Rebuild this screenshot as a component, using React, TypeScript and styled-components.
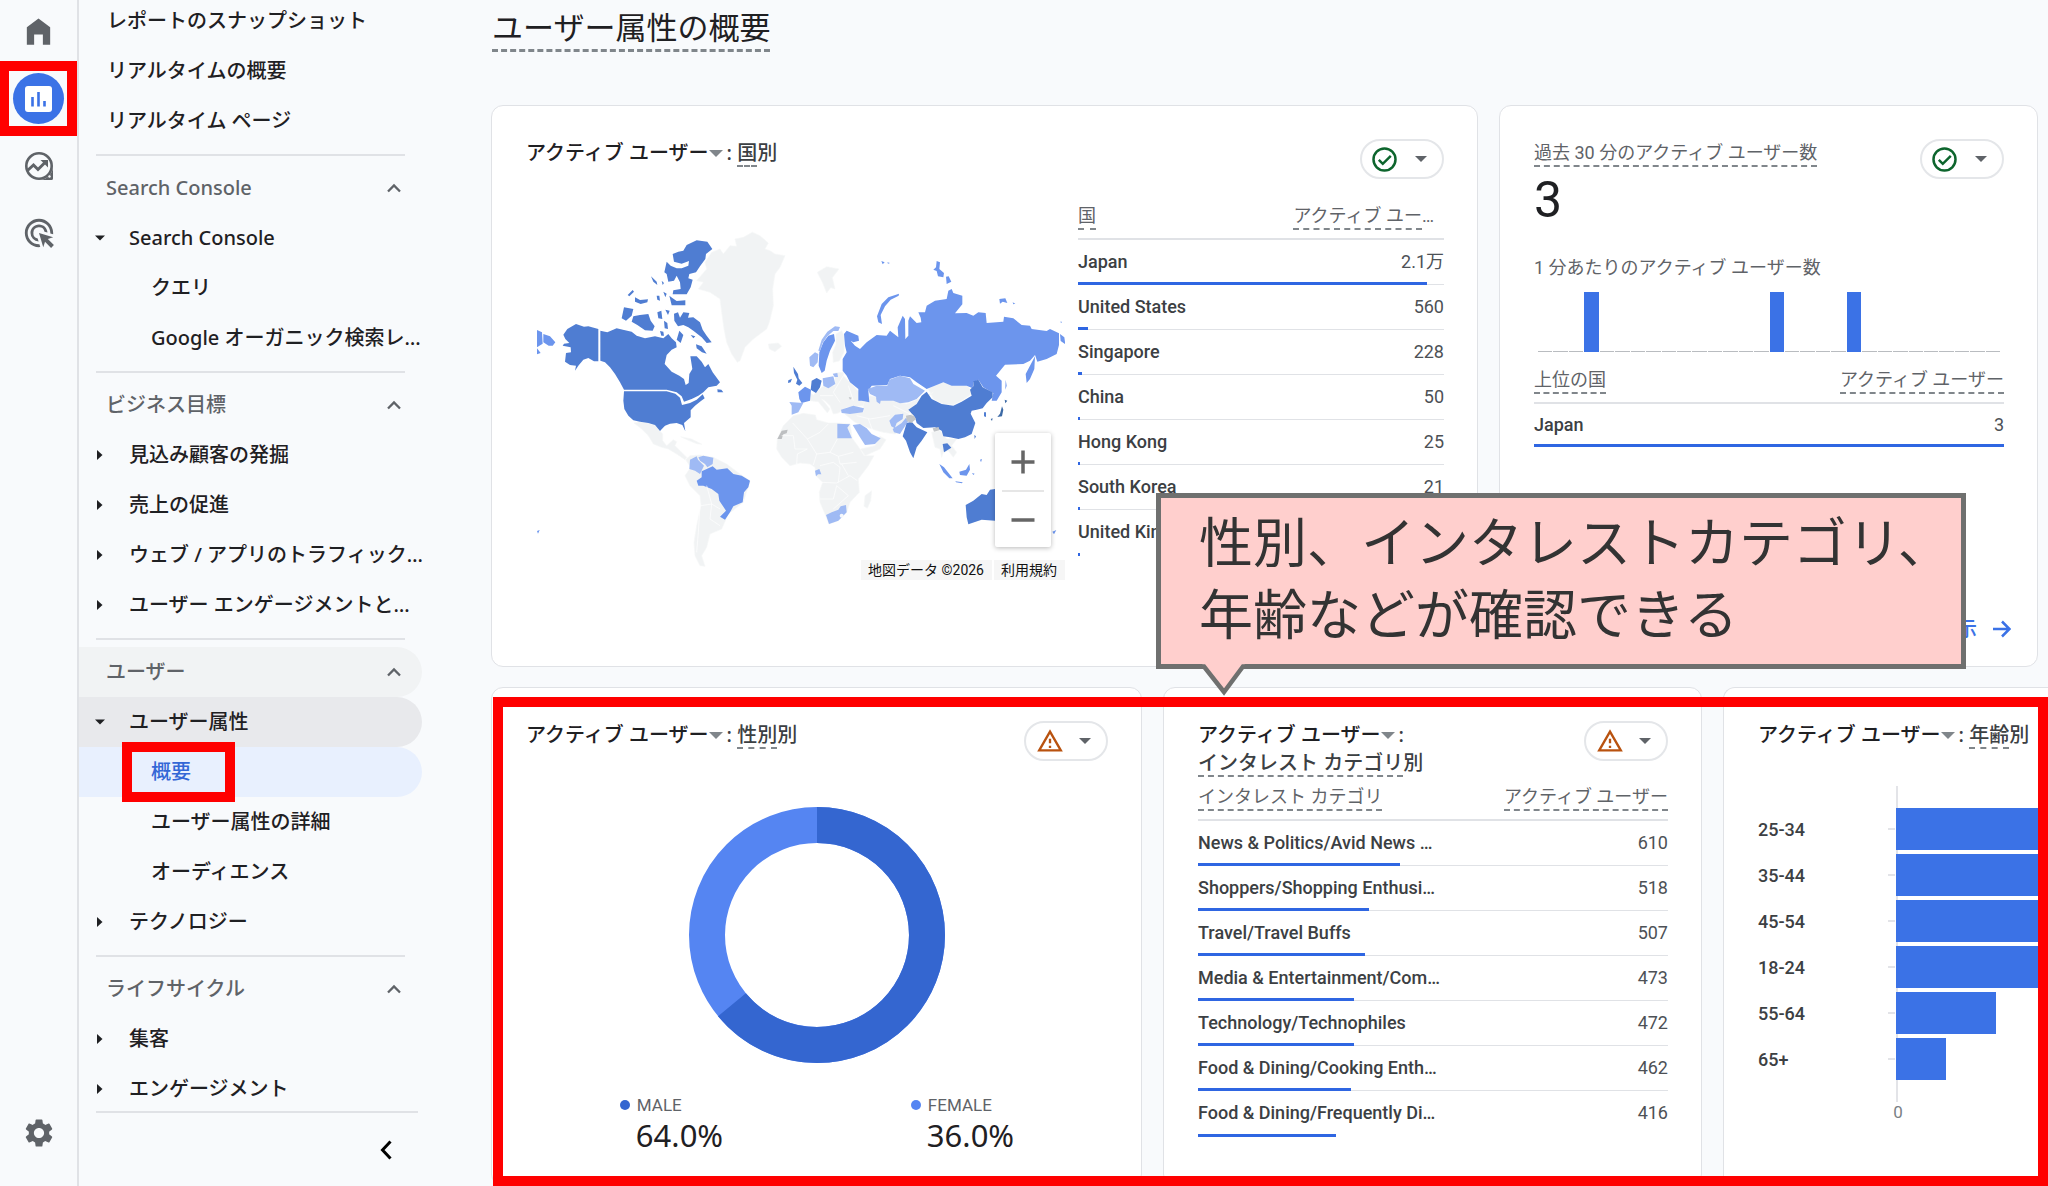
import React from "react";
import styled, { createGlobalStyle } from "styled-components";
import { MdAdsClick, MdSettings } from "react-icons/md";

const ui = `Roboto, "Noto Sans CJK JP", sans-serif`;
const brand = `"Noto Sans", "Noto Sans CJK JP", sans-serif`;

const color = {
  page: "#f8fafc",
  line: "#e0e2e6",
  ink: "#1f2023",
  text: "#3c4043",
  muted: "#5f6368",
  dash: "#80868b",
  blue: "#3b72e6",
  bar: "#2f66e2",
  red: "#ff0000",
};

const Global = createGlobalStyle`
  *, *::before, *::after { box-sizing: border-box; }
  html, body { margin: 0; height: 100%; }
  body { background: ${color.page}; font-family: ${ui}; color: ${color.text}; overflow: hidden; }
  button { font: inherit; color: inherit; background: none; border: 0; padding: 0; margin: 0; cursor: pointer; }
  a { color: inherit; text-decoration: none; }
  svg { display: block; flex: none; }
`;

const Shell = styled.div`
  display: flex;
  height: 100vh;
  overflow: hidden;
`;

/* ---------- red annotation frame ---------- */

const Frame = styled.span<{ $inset: string }>`
  position: absolute;
  inset: ${(p) => p.$inset};
  border: 10px solid ${color.red};
  pointer-events: none;
`;

/* ---------- icon rail ---------- */

const Rail = styled.nav`
  flex: none;
  width: 79px;
  border-right: 2px solid ${color.line};
  display: flex;
  flex-direction: column;
  align-items: center;
  padding: 6px 0 28px;
  gap: 16px;
`;

const RailButton = styled.button<{ $active?: boolean; $last?: boolean }>`
  position: relative;
  width: 51px;
  height: 51px;
  border-radius: 50%;
  display: grid;
  place-items: center;
  color: ${(p) => (p.$active ? "#fff" : color.muted)};
  background: ${(p) => (p.$active ? color.blue : "none")};
  margin-top: ${(p) => (p.$last ? "auto" : "0")};
`;

/* ---------- navigation ---------- */

const Side = styled.nav`
  flex: none;
  width: 343px;
  display: flex;
  flex-direction: column;
  font-family: ${brand};
  font-size: 20px;
  font-weight: 500;
  line-height: 30px;
  color: ${color.ink};
`;

const Scroller = styled.div`
  flex: 1;
  margin-top: -4px;
  min-height: 0;
`;

const rowTone = {
  none: "transparent",
  section: "#f1f3f4",
  parent: "#e8e9ec",
  current: "#e8f0fe",
};

const NavRow = styled.a<{ $indent: number; $tone: keyof typeof rowTone }>`
  position: relative;
  display: flex;
  align-items: center;
  width: 100%;
  height: 50px;
  padding-left: ${(p) => p.$indent}px;
  border-radius: 0 25px 25px 0;
  background: ${(p) => rowTone[p.$tone]};
  color: ${(p) => (p.$tone === "current" ? "#3367d6" : "inherit")};
  white-space: nowrap;
`;

const SectionRow = styled(NavRow)`
  justify-content: space-between;
  padding-right: 20px;
  color: ${color.muted};
`;

const Twist = styled.span`
  width: 34px;
  padding-left: 16px;
  box-sizing: content-box;
  flex: none;
`;

const Rule = styled.hr`
  margin: 8px 17px 7px;
  border: 0;
  height: 2px;
  background: ${color.line};
`;

const SideFoot = styled.div`
  margin: 0 4px 0 17px;
  border-top: 2px solid ${color.line};
  height: 75px;
  display: flex;
  justify-content: flex-end;
  align-items: center;
  padding-right: 26px;
`;

/* ---------- report area ---------- */

const Main = styled.main`
  flex: 1;
  min-width: 0;
  padding-left: 69px;
  display: flex;
  flex-direction: column;
`;

const PageTitle = styled.h1`
  align-self: flex-start;
  margin: 5px 0 53px 1px;
  font-family: ${brand};
  font-size: 31px;
  font-weight: 400;
  line-height: 44px;
  color: ${color.ink};
  border-bottom: 3px dashed ${color.dash};
`;

const TopRow = styled.div`
  display: grid;
  grid-template-columns: 987fr 539fr;
  gap: 21px;
  margin-right: 10px;
  min-height: 562px;
`;

const BottomRow = styled.div`
  position: relative;
  flex: 1;
  margin-top: 20px;
  display: grid;
  grid-template-columns: 651fr 539fr 325fr;
  gap: 21px;
`;

const Card = styled.section<{ $bleed?: boolean }>`
  display: flex;
  flex-direction: column;
  min-width: 0;
  padding: 33px ${(p) => (p.$bleed ? 0 : 33)}px 0 34px;
  background: #fff;
  border: 1px solid ${color.line};
  border-width: ${(p) => (p.$bleed ? "1px 0 0 1px" : "1px")};
  border-radius: ${(p) => (p.$bleed ? "12px 0 0 0" : "12px")};
`;

const CardHead = styled.header`
  display: flex;
  justify-content: space-between;
  align-items: flex-start;
`;

const CardTitle = styled.h2`
  margin: 0;
  font-family: ${brand};
  font-size: 20px;
  font-weight: 500;
  line-height: 28px;
  color: ${color.text};
`;

const MetricButton = styled.button`
  display: inline-flex;
  align-items: center;
  margin-right: 4px;
  color: ${color.ink};
`;

const Dashed = styled.span`
  display: inline-block;
  line-height: 24px;
  border-bottom: 2px dashed ${color.dash};
`;

const Status = styled.button`
  flex: none;
  width: 84px;
  height: 40px;
  padding: 0 15px 0 10px;
  border: 2px solid #e4e6e9;
  border-radius: 20px;
  display: flex;
  align-items: center;
  justify-content: space-between;
`;

/* ---------- data table ---------- */

const Table = styled.table`
  width: 100%;
  border-collapse: collapse;
  font-size: 18px;
  line-height: 24px;
`;

const HeadCell = styled.th<{ $end?: boolean }>`
  height: 43px;
  padding: 0;
  font-weight: 400;
  white-space: nowrap;
  color: ${color.muted};
  text-align: ${(p) => (p.$end ? "right" : "left")};
  vertical-align: middle;
  border-bottom: 2px solid ${color.line};
`;

const Row = styled.tr<{ $height: number }>`
  position: relative;
  height: ${(p) => p.$height}px;
  border-bottom: 1px solid ${color.line};
  &:last-child { border-bottom: 0; }
`;

const NameCell = styled.th`
  padding: 0;
  font-weight: 500;
  text-align: left;
  white-space: nowrap;
`;

const ValueCell = styled.td`
  padding: 0;
  text-align: right;
  color: #4d5156;
`;

const Meter = styled.span`
  position: absolute;
  left: 0;
  bottom: -2px;
  height: 3px;
  background: ${color.bar};
`;

const ShortHead = styled.span`
  padding-right: 10px;
`;

/* ---------- map ---------- */

const MapBody = styled.div`
  display: grid;
  grid-template-columns: 528fr 366fr;
  gap: 13px;
  align-items: start;
  padding: 17px 0 0 11px;
`;

const MapBox = styled.div`
  position: relative;
  margin-top: 28px;
  height: 357px;
`;

const ZoomPanel = styled.div`
  position: absolute;
  right: 14px;
  bottom: 34px;
  width: 56px;
  display: flex;
  flex-direction: column;
  align-items: center;
  background: #fff;
  border-radius: 2px;
  box-shadow: 0 1px 5px rgba(0, 0, 0, 0.28);
`;

const ZoomButton = styled.button`
  width: 42px;
  height: 57px;
  display: grid;
  place-items: center;
  & + & { border-top: 2px solid #e6e6e6; }
`;

const Credits = styled.div`
  position: absolute;
  right: 0;
  bottom: 1px;
  display: flex;
  gap: 2px;
  font-size: 14px;
  line-height: 20px;
  color: #111;
  span, a { background: #f6f6f6; padding: 0 8px 0 7px; }
`;

/* ---------- realtime card ---------- */

const Caption = styled.div`
  font-size: 18px;
  line-height: 28px;
  color: ${color.muted};
`;

const Big = styled.div`
  font-size: 50px;
  line-height: 42px;
  margin-bottom: 33px;
  color: ${color.ink};
`;

const Spark = styled.div`
  display: flex;
  align-items: flex-end;
  gap: 1px;
  height: 60px;
  margin: 10px 4px 8px;
`;

const Tick = styled.i<{ $on: boolean }>`
  flex: 1;
  height: ${(p) => (p.$on ? 60 : 1)}px;
  background: ${(p) => (p.$on ? color.blue : "#b9bcc0")};
`;

const MoreLink = styled.a`
  margin: auto -7px 23px auto;
  display: flex;
  align-items: center;
  gap: 16px;
  font-size: 20px;
  line-height: 28px;
  font-weight: 500;
  color: ${color.blue};
`;

/* ---------- donut ---------- */

const DonutBox = styled.div`
  display: flex;
  justify-content: center;
  margin: 46px 0 30px;
`;

const Legend = styled.dl`
  margin: 0;
  display: grid;
  grid-template-columns: 1fr 1fr;
  justify-items: center;
`;

const LegendName = styled.dt<{ $dot: string }>`
  display: flex;
  align-items: center;
  gap: 7px;
  font-size: 17px;
  line-height: 24px;
  color: ${color.muted};
  &::before {
    content: "";
    width: 10px;
    height: 10px;
    border-radius: 50%;
    background: ${(p) => p.$dot};
  }
`;

const LegendValue = styled.dd`
  margin: 0 0 0 16px;
  font-family: ${brand};
  font-size: 31px;
  line-height: 36px;
  color: ${color.ink};
`;

/* ---------- age chart ---------- */

const Bars = styled.div`
  position: relative;
  margin-top: 37px;
  padding: 20px 0;
  font-size: 18px;
  font-weight: 500;
  &::before {
    content: "";
    position: absolute;
    left: 138px;
    top: 0;
    bottom: 0;
    width: 2px;
    background: #e3e4e8;
  }
`;

const BarRow = styled.div`
  position: relative;
  display: grid;
  grid-template-columns: 130px 8px 1fr;
  align-items: center;
  height: 46px;
`;

const TickMark = styled.i`
  width: 7px;
  height: 2px;
  background: #e3e4e8;
`;

const BarFill = styled.span`
  height: 42px;
  background: ${color.blue};
`;

const Zero = styled.div`
  width: 280px;
  text-align: center;
  font-size: 17px;
  line-height: 20px;
  color: #7a7f85;
`;

/* ---------- callout ---------- */

const Callout = styled.aside`
  position: absolute;
  left: 665px;
  top: -194px;
  width: 810px;
  height: 176px;
  padding: 6px 0 0 38px;
  background: #ffcfcd;
  border: 5px solid #6f706f;
  font-family: "Noto Sans CJK JP", sans-serif;
  font-size: 54px;
  line-height: 72px;
  white-space: nowrap;
  color: #333;
`;

const Tail = styled.svg`
  position: absolute;
  left: 40px;
  top: 166px;
`;

/* ---------- small glyphs ---------- */

const Caret = ({ fill = "#5f6368", w = 12 }: { fill?: string; w?: number }) => (
  <svg width={w} height={w / 2} viewBox="0 0 12 6"><path d="M0 0h12L6 6z" fill={fill} /></svg>
);
const CaretRight = () => (
  <svg width="10" height="10" viewBox="0 0 10 10"><path d="M2 0l5.500 5-5.500 5z" fill="#1f2023" /></svg>
);
const CaretDown = () => (
  <svg width="10" height="10" viewBox="0 0 10 10"><path d="M0 2.500h10l-5 5z" fill="#1f2023" /></svg>
);
const ChevronUp = () => (
  <svg width="16" height="16" viewBox="0 0 16 16" fill="none" stroke="#5f6368" strokeWidth="2.300"><path d="M2 11.500l6-6 6 6" /></svg>
);
const HomeIcon = () => (
  <svg width="35" height="35" viewBox="0 0 24 24" fill="currentColor"><path d="M4 21V9l8-6 8 6v12h-5v-7H9v7z" /></svg>
);
const ChartIcon = () => (
  <svg width="27" height="26" viewBox="0 0 27 26">
    <rect width="27" height="26" rx="3" fill="#fff" />
    <path d="M7.500 11v9.500M13.500 6v14.500M19.500 15v5.500" stroke={color.blue} strokeWidth="2.600" />
  </svg>
);
const ExploreIcon = () => (
  <svg width="30" height="30" viewBox="0 0 30 30" fill="none">
    <circle cx="15" cy="15" r="12.700" stroke="currentColor" strokeWidth="2.600" />
    <path d="M29 15v12.500a1.500 1.500 0 0 1-1.500 1.500H15a14 14 0 0 0 14-14z" fill="currentColor" />
    <circle cx="25.500" cy="25.500" r="1.200" fill={color.page} />
    <path d="M3.500 19.500l6-5.500 4.500 4.500 7.500-7.500" stroke="currentColor" strokeWidth="3" />
    <path d="M16.500 9H24v7.500z" fill="currentColor" />
  </svg>
);
const CheckIcon = () => (
  <svg width="25" height="25" viewBox="0 0 25 25" fill="none" stroke="#0d652d" strokeWidth="2.500">
    <circle cx="12.500" cy="12.500" r="11" /><path d="M6.800 12.800l4 4 8-8" />
  </svg>
);
const WarnIcon = () => (
  <svg width="28" height="28" viewBox="0 0 24 24" fill="#b9520f">
    <path d="M12 5.990L19.530 19H4.470L12 5.990M12 2L1 21h22L12 2zm1 14h-2v2h2v-2zm0-6h-2v4h2v-4z" />
  </svg>
);

/* ---------- world map drawing ---------- */

const dark = "#4f7dd2";
const mid = "#6c95ed";
const pale = "#9fbaf4";
const land = "#f1f3f4";

const west: [string, string[]][] = [
  [land, [
    "M697 40L720 50 745 72 735 90 750 95 765 105 795 110 780 145 765 165 758 210 760 260 748 310 740 330 700 360 675 385 660 425 652 430 635 405 620 370 612 330 605 280 600 240 570 220 535 210 550 190 530 185 560 150 555 130 575 100 600 90 610 105 630 80 650 82 645 60 670 55Z",
    "M745 375L775 372 785 382 765 398 748 390Z",
    "M892 160L920 143 957 150 937 176 945 210 932 206 920 222 908 192Z",
    "M342 612L360 608 385 612 405 618 420 636 428 645 428 665 440 680 460 662 470 668 465 680 485 700 500 715 495 722 470 705 445 690 425 685 400 675 385 650 365 630Z",
    "M482 653L515 660 546 676 530 674 505 664Z",
    "M497 722L510 710 540 708 580 715 620 735 660 765 690 785 670 850 625 885 605 930 570 945 560 985 545 1010 555 1042 540 1040 525 1010 522 970 530 920 543 860 540 830 510 800 495 770 512 745Z",
    "M820 590L850 583 886 588 890 602 925 612 952 612 990 614 997 658 1020 690 1032 710 1062 710 1045 740 1015 780 1018 820 990 850 980 880 955 905 927 915 915 885 900 850 898 820 908 790 888 770 885 745 870 735 840 732 810 740 785 715 770 690 772 660 790 620Z",
    "M1035 830L1055 815 1052 845 1042 868 1032 862Z",
    "M868 520L880 528 905 505 912 500 945 500 945 462 968 460 975 430 970 470 1000 500 1035 540 1030 560 980 565 955 582 940 585 930 560 915 545 905 540 930 570 922 582 895 548 870 545Z",
    "M948 345L965 335 972 350 972 400 958 426 940 430 938 400 948 375Z",
  ]],
  [dark, [
    "M130 347L142 330 168 315 192 323 205 322 235 330 235 427 222 427 205 417 190 422 175 440 165 455 168 440 150 438 135 428 138 402 153 400 152 385 128 380 132 374 148 372 136 360Z",
    "M241 335L262 340 290 328 312 333 335 338 350 350 375 358 405 352 430 358 445 345 455 358 468 370 470 385 455 392 440 408 434 435 455 458 478 470 492 480 497 498 506 492 508 465 517 450 511 412 530 412 545 428 555 445 565 435 578 460 600 490 590 500 565 505 550 520 535 530 515 540 492 548 485 532 470 520 440 512 312 512 300 490 285 465 270 445 255 430 241 425Z",
    "M312 517L440 517 466 524 480 536 486 558 510 552 530 542 548 526 554 538 540 548 525 560 512 574 512 595 492 612 496 637 487 618 470 612 450 614 435 620 420 636 405 618 385 612 360 608 340 604 325 590 313 570 310 545Z",
    "M458 105L475 98 490 95 500 78 530 64 562 68 577 90 558 105 556 120 540 142 528 160 508 165 505 178 518 182 512 205 500 226 458 226 460 214 482 210 480 190 470 170 462 185 445 188 440 165 433 160 440 128 452 140 470 148 485 148 505 140 507 126 485 134 462 128Z",
    "M448 230L458 238 470 246 496 244 496 259 455 259Z",
    "M312 265L340 270 335 290 318 305 305 298Z",
    "M340 292L360 288 385 285 392 305 404 322 398 335 375 334 352 318 335 308Z",
    "M462 284L474 280 480 296 490 280 508 282 504 296 520 295 540 310 548 332 560 350 575 370 560 372 545 355 520 335 505 325 490 318 474 322 463 305Z",
    "M345 235L360 243 384 241 382 250 362 255 345 248Z", "M323 228L338 213 342 218 328 232Z",
    "M393 172L410 188 412 198 400 188Z", "M410 230L418 230 420 245 412 242Z", "M430 218L440 224 436 235Z",
    "M412 280L424 275 427 300 415 298Z", "M432 305L442 312 444 330 434 328Z", "M436 272L449 275 444 288Z",
    "M425 185L432 192 428 198Z", "M478 335L490 348 482 372 470 362Z", "M528 376L545 382 560 404 546 400 530 388Z",
    "M512 348L526 352 520 358Z", "M592 511L604 512 610 520 593 520Z", "M420 336L430 338 432 350 424 350Z",
    "M820 443L834 465 836 478 847 492 838 500 828 494 832 482 822 462Z", "M805 484L816 479 812 490 804 492Z",
    "M875 485L890 477 905 485 900 505 888 522 872 512Z",
  ]],
  [mid, [
    "M545 757L560 750 578 742 590 752 622 748 640 765 665 770 690 785 685 805 672 820 668 850 640 862 630 880 615 902 600 893 618 875 598 845 595 825 575 810 550 800 535 800 530 785 545 775Z",
    "M51 333L66 340 68 374 51 385Z", "M70 345L90 352 106 370 98 380 86 380 70 370Z", "M51 388L62 402 51 406Z", "M51 936L59 933 54 944Z",
    "M905 462L896 440 898 400 910 370 925 350 942 345 945 365 930 395 920 425 914 455Z",
    "M835 520L855 503 873 512 870 545 845 552 838 540Z",
  ]],
  [pale, [
    "M510 722L530 712 534 722 552 740 540 765 525 755 508 750Z", "M535 715L550 710 580 716 578 735 562 745 555 735 540 725Z",
    "M808 549L850 552 835 580 815 587 815 560Z", "M868 415L885 400 895 405 893 430 880 445 870 440Z",
    "M895 395L905 362 922 338 945 322 960 324 955 336 940 336 922 352 908 372 900 396Z",
    "M908 478L940 472 946 495 925 508 910 500Z", "M938 464L952 462 954 474 944 474Z",
    "M952 614L990 616 982 626 996 658 952 658Z", "M885 755L898 750 904 766 894 766 888 772Z",
    "M918 888L935 880 955 872 962 862 978 858 980 880 955 905 927 915Z",
  ]],
];

const east: [string, string[]][] = [
  [land, [
    "M190 555L210 530 320 555 400 520 335 570 320 600 300 640 285 645 250 640 232 635 200 625 165 610 135 585 190 578Z",
    "M385 510L410 495 430 490 460 500 500 500 522 520 490 542 460 558 430 555 400 540Z",
    "M240 652L258 662 240 690 195 710 182 690 225 680Z",
    "M395 640L420 635 440 660 470 660 455 680 470 700 460 715 445 695 430 700 425 715 420 690 405 685Z",
  ]],
  [mid, [
    "M140 335L175 350 177 365 160 370 152 365 165 380 180 390 200 370 230 348 260 350 270 335 295 355 293 325 308 290 315 300 316 360 325 350 325 305 330 292 350 312 364 310 362 296 355 280 375 280 380 260 405 245 440 240 445 215 455 210 460 222 487 230 487 256 465 283 500 282 520 290 535 280 557 282 560 312 610 308 612 293 640 298 665 318 690 320 695 330 740 336 750 330 777 343 777 378 770 405 740 420 712 428 705 408 690 425 670 435 615 437 588 470 605 485 605 520 590 545 575 545 580 522 550 505 535 482 520 490 518 508 500 500 455 500 430 490 380 510 350 490 330 475 300 470 270 480 262 498 215 500 205 515 208 550 185 545 175 545 175 510 150 490 140 470 128 455 128 420 140 400 135 380 132 345Z",
    "M705 412L703 450 690 480 680 492 677 465 690 440Z", "M780 345L793 355 796 376 782 366Z",
    "M235 310L231 292 245 255 265 235 297 224 296 230 272 242 255 262 242 288 246 315Z",
    "M400 152L408 145 410 126 420 130 418 150 432 162 430 175 414 172 410 156Z", "M438 173L446 172 454 188 440 195Z",
    "M598 240L616 238 622 252 608 248 600 254Z", "M638 250L646 254 640 256Z", "M244 126L254 130 248 136Z", "M262 130L270 132 264 134Z",
    "M780 308L786 308 784 312Z", "M617 482L620 500 616 512Z",
    "M418 735L432 745 458 778 448 778 430 760Z", "M478 758L498 752 508 735 510 752 500 770 480 768Z",
    "M466 787L488 790 486 793 468 790Z", "M516 762L524 764 520 768Z", "M540 722L546 720 543 730Z", "M757 938L769 933 762 946Z",
  ]],
  [pale, [
    "M203 510L230 500 262 500 268 482 300 470 330 478 340 495 375 515 350 540 325 550 300 553 280 545 235 545 228 533 210 525Z",
    "M123 572L160 560 192 568 188 580 150 585 125 582Z", "M228 535L242 545 240 555 230 548Z",
    "M268 605L285 587 310 584 308 600 290 612 284 628 274 622Z", "M278 630L305 612 318 596 325 606 308 632 300 645 282 640Z",
    "M158 618L180 615 200 628 215 645 242 658 225 675 195 678 180 655Z",
  ]],
  [dark, [
    "M325 572L350 555 365 530 380 518 395 540 425 555 460 560 485 548 515 530 510 512 520 502 520 487 535 482 548 505 578 520 578 535 560 552 548 568 530 572 515 575 512 584 526 612 515 645 495 655 475 660 450 655 430 652 425 635 405 625 370 627 350 612 345 595Z",
    "M308 652L320 612 335 608 350 625 382 640 365 665 350 685 340 718 330 700 318 665Z",
    "M428 675L442 673 454 686 444 692 432 700Z", "M552 580L558 580 558 594 552 592Z", "M523 648L528 652 524 660Z",
    "M497 858L520 845 545 825 560 828 570 812 585 810 650 815 690 870 640 930 585 905 545 902 505 916 500 895Z",
  ]],
  ["#3d6aa6", ["M614 542L622 545 616 553Z", "M606 562L610 572 606 592 592 594 600 584Z", "M572 600L578 598 576 606Z"]],
  ["#c3c6c9", ["M318 590L338 586 348 600 334 612 320 606Z", "M398 628L416 624 418 634 402 638Z", "M146 534L156 536 150 542Z"]],
];

const borders = [
  "M818 612L862 660 900 640 925 615M862 660L890 705 930 700 952 660M785 650L820 650 825 690 862 690M830 735L832 705 862 690M890 705L880 738M930 700L955 712 1000 700M955 712L960 735 1010 730M900 740L940 730 960 745 955 790M905 790L950 792 990 770 1012 785M900 840L940 840 950 800 985 830 940 870M965 735L985 770",
  "M543 860L575 855 600 870M540 860L535 940 530 1000M560 800L575 855 570 900 600 920",
  "M970 470L940 520 960 550M985 500L1000 545M900 530L940 530M1010 590L1050 600 1110 590M1045 600L1060 640M1120 560L1180 590",
];

const WorldMap = () => (
  <svg width="100%" height="100%" viewBox="51 15 1584 1071" preserveAspectRatio="xMinYMin meet" role="img" aria-label="国別の地図">
    {[west, east].map((half, i) => (
      <g key={i} transform={i ? "translate(840 0)" : undefined} strokeLinejoin="round">
        {half.map(([fill, shapes]) => <path key={fill} d={shapes.join("")} fill={fill} stroke={fill === land ? "#f6f7f8" : "none"} strokeWidth="2" />)}
      </g>
    ))}
    <path d="M772 660L785 635 803 632 800 643 790 646 785 660Z" fill="#bdbfc1" />
    <path d={borders.join("")} fill="none" stroke="#fff" strokeWidth="2" />
    <circle cx="965" cy="890" r="6" fill="#f6f8fc" />
  </svg>
);

/* ---------- data ---------- */

type NavItem = { label: string; kind: "link" | "section" | "closed" | "open" | "child"; tone?: keyof typeof rowTone };

const groups: NavItem[][] = [
  [
    { label: "レポートのスナップショット", kind: "link" },
    { label: "リアルタイムの概要", kind: "link" },
    { label: "リアルタイム ページ", kind: "link" },
  ],
  [
    { label: "Search Console", kind: "section" },
    { label: "Search Console", kind: "open" },
    { label: "クエリ", kind: "child" },
    { label: "Google オーガニック検索レ…", kind: "child" },
  ],
  [
    { label: "ビジネス目標", kind: "section" },
    { label: "見込み顧客の発掘", kind: "closed" },
    { label: "売上の促進", kind: "closed" },
    { label: "ウェブ / アプリのトラフィック…", kind: "closed" },
    { label: "ユーザー エンゲージメントと…", kind: "closed" },
  ],
  [
    { label: "ユーザー", kind: "section", tone: "section" },
    { label: "ユーザー属性", kind: "open", tone: "parent" },
    { label: "概要", kind: "child", tone: "current" },
    { label: "ユーザー属性の詳細", kind: "child" },
    { label: "オーディエンス", kind: "child" },
    { label: "テクノロジー", kind: "closed" },
  ],
  [
    { label: "ライフサイクル", kind: "section" },
    { label: "集客", kind: "closed" },
    { label: "エンゲージメント", kind: "closed" },
  ],
];

type Datum = [name: string, value: string, percent: number];

const countries: Datum[] = [
  ["Japan", "2.1万", 95.4], ["United States", "560", 2.6], ["Singapore", "228", 1.2], ["China", "50", 0.5],
  ["Hong Kong", "25", 0.5], ["South Korea", "21", 0.5], ["United Kingdom", "", 0.5],
];

const interests: Datum[] = [
  ["News & Politics/Avid News …", "610", 43], ["Shoppers/Shopping Enthusi…", "518", 36.4], ["Travel/Travel Buffs", "507", 35.6],
  ["Media & Entertainment/Com…", "473", 33.2], ["Technology/Technophiles", "472", 33.2],
  ["Food & Dining/Cooking Enth…", "462", 32.6], ["Food & Dining/Frequently Di…", "416", 29.4],
];

const ages: [string, number][] = [["25-34", 100], ["35-44", 100], ["45-54", 100], ["18-24", 100], ["55-64", 66], ["65+", 33]];

/* ---------- parts ---------- */

const NavEntry = ({ item }: { item: NavItem }) => {
  const tone = item.tone ?? "none";
  if (item.kind === "section")
    return <SectionRow as="button" $indent={27} $tone={tone} aria-expanded="true">{item.label}<ChevronUp /></SectionRow>;
  if (item.kind === "link") return <NavRow href="#" $indent={28} $tone={tone}>{item.label}</NavRow>;
  if (item.kind === "child")
    return (
      <NavRow href="#" $indent={72} $tone={tone} aria-current={tone === "current" ? "page" : undefined}>
        {item.label}
        {tone === "current" && <Frame $inset="-5px 187px -5px 43px" />}
      </NavRow>
    );
  return (
    <NavRow as="button" $indent={0} $tone={tone} aria-expanded={item.kind === "open"}>
      <Twist>{item.kind === "open" ? <CaretDown /> : <CaretRight />}</Twist>{item.label}
    </NavRow>
  );
};

const Title = ({ by, wrap }: { by: string; wrap?: boolean }) => (
  <CardTitle>
    <MetricButton>アクティブ ユーザー<Caret w={14} fill="#80868b" /></MetricButton>:{wrap ? <br /> : " "}
    <Dashed>{by}</Dashed>別
  </CardTitle>
);

const StatusMenu = ({ warn }: { warn?: boolean }) => (
  <Status aria-label={warn ? "データの警告" : "データの状態"}>{warn ? <WarnIcon /> : <CheckIcon />}<Caret /></Status>
);

const DataTable = ({ heads, rows, rowHeight = 45 }: { heads: [string, React.ReactNode]; rows: Datum[]; rowHeight?: number }) => (
  <Table>
    <thead>
      <tr>
        <HeadCell scope="col"><Dashed>{heads[0]}</Dashed></HeadCell>
        <HeadCell scope="col" $end>{heads[1]}</HeadCell>
      </tr>
    </thead>
    <tbody>
      {rows.map(([name, value, percent]) => (
        <Row key={name} $height={rowHeight}>
          <NameCell scope="row">{name}<Meter style={{ width: `${percent}%` }} /></NameCell>
          <ValueCell>{value}</ValueCell>
        </Row>
      ))}
    </tbody>
  </Table>
);

const Donut = () => {
  const r = 110;
  const c = 2 * Math.PI * r;
  return (
    <svg width="256" height="256" viewBox="0 0 256 256" role="img" aria-label="性別の割合">
      <g transform="rotate(-90 128 128)" fill="none" strokeWidth="36">
        <circle cx="128" cy="128" r={r} stroke="#5585f2" />
        <circle cx="128" cy="128" r={r} stroke="#3466d0" strokeDasharray={`${c * 0.64} ${c}`} />
      </g>
    </svg>
  );
};

export default function App() {
  return (
    <Shell lang="ja">
      <Global />
      <Rail aria-label="メイン">
        <RailButton aria-label="ホーム"><HomeIcon /></RailButton>
        <RailButton aria-label="レポート" $active><ChartIcon /><Frame $inset="-12px -13px -12px -14px" /></RailButton>
        <RailButton aria-label="探索"><ExploreIcon /></RailButton>
        <RailButton aria-label="広告"><MdAdsClick size={34} /></RailButton>
        <RailButton aria-label="管理" $last><MdSettings size={34} /></RailButton>
      </Rail>

      <Side aria-label="レポート">
        <Scroller>
          {groups.map((items, g) => (
            <React.Fragment key={g}>
              {g > 0 && <Rule />}
              {items.map((item) => <NavEntry key={item.kind + item.label} item={item} />)}
            </React.Fragment>
          ))}
        </Scroller>
        <SideFoot>
          <button aria-label="折りたたむ">
            <svg width="12" height="20" viewBox="0 0 12 20" fill="none" stroke="#000" strokeWidth="3"><path d="M10.500 1.500L2.500 10l8 8.500" /></svg>
          </button>
        </SideFoot>
      </Side>

      <Main>
        <PageTitle>ユーザー属性の概要</PageTitle>
        <TopRow>
          <Card>
            <CardHead><Title by="国" /><StatusMenu /></CardHead>
            <MapBody>
              <MapBox>
                <WorldMap />
                <ZoomPanel>
                  <ZoomButton aria-label="拡大"><svg width="24" height="24" viewBox="0 0 24 24"><path d="M12 .5v23M.5 12h23" stroke="#666" strokeWidth="3.500" /></svg></ZoomButton>
                  <ZoomButton aria-label="縮小"><svg width="24" height="24" viewBox="0 0 24 24"><path d="M.5 12h23" stroke="#666" strokeWidth="3.500" /></svg></ZoomButton>
                </ZoomPanel>
                <Credits><span>地図データ ©2026</span><a href="#">利用規約</a></Credits>
              </MapBox>
              <DataTable heads={["国", <ShortHead><Dashed>アクティブ ユー</Dashed>…</ShortHead>]} rows={countries} />
            </MapBody>
          </Card>

          <Card>
            <CardHead>
              <Caption><Dashed>過去 30 分のアクティブ ユーザー数</Dashed></Caption>
              <StatusMenu />
            </CardHead>
            <Big>3</Big>
            <Caption>1 分あたりのアクティブ ユーザー数</Caption>
            <Spark>{Array.from({ length: 30 }, (_, i) => <Tick key={i} $on={[3, 15, 20].includes(i)} />)}</Spark>
            <DataTable heads={["上位の国", <Dashed>アクティブ ユーザー</Dashed>]} rows={[["Japan", "3", 100]]} rowHeight={42} />
            <MoreLink href="#">
              リアルタイムを表示
              <svg width="18" height="18" viewBox="0 0 18 18" fill="none" stroke="currentColor" strokeWidth="2.500"><path d="M0 9h16M9 1.500L16.500 9 9 16.500" /></svg>
            </MoreLink>
          </Card>
        </TopRow>

        <BottomRow>
          <Card>
            <CardHead><Title by="性別" /><StatusMenu warn /></CardHead>
            <DonutBox><Donut /></DonutBox>
            <Legend>
              <div><LegendName $dot="#3466d0">MALE</LegendName><LegendValue>64.0%</LegendValue></div>
              <div><LegendName $dot="#5585f2">FEMALE</LegendName><LegendValue>36.0%</LegendValue></div>
            </Legend>
          </Card>

          <Card>
            <CardHead><Title by="インタレスト カテゴリ" wrap /><StatusMenu warn /></CardHead>
            <DataTable heads={["インタレスト カテゴリ", <Dashed>アクティブ ユーザー</Dashed>]} rows={interests} />
          </Card>

          <Card $bleed>
            <CardHead><Title by="年齢" /></CardHead>
            <Bars>
              {ages.map(([label, percent]) => (
                <BarRow key={label}><span>{label}</span><TickMark /><BarFill style={{ width: `${percent}%` }} /></BarRow>
              ))}
            </Bars>
            <Zero>0</Zero>
          </Card>

          <Frame $inset="10px 0 0 2px" />
          <Callout>
            性別、インタレストカテゴリ、<br />年齢などが確認できる
            <Tail width="46" height="34" viewBox="0 0 46 34">
              <path d="M1 0h43L23 28z" fill="#ffcfcd" />
              <path d="M1 2.500H3L23 28 42 2.500h2" fill="none" stroke="#6f706f" strokeWidth="4.500" />
            </Tail>
          </Callout>
        </BottomRow>
      </Main>
    </Shell>
  );
}
